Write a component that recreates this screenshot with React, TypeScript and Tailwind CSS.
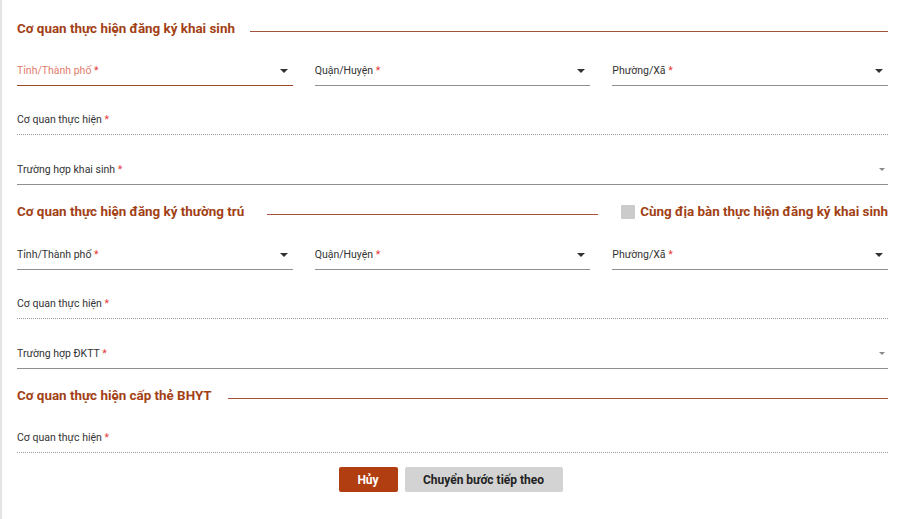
import React from "react";

const BROWN = "text-[#a23f15]";

function Header({ title, gap, right }: { title: string; gap: string; right?: React.ReactNode }) {
  return (
    <div className="flex h-[20px] items-center">
      <span className={`text-[13.4px] font-bold ${BROWN} whitespace-nowrap`}>{title}</span>
      <div className={`${gap} h-px flex-1 bg-[#a3533a] mt-[4px]`} />
      {right}
    </div>
  );
}

function Star() {
  return <span className="text-[#e53935]"> *</span>;
}

function Caret({ small }: { small?: boolean }) {
  if (small) {
    return (
      <svg width="6" height="3" viewBox="0 0 6 3" className="mr-[3px]">
        <path d="M0 0 L6 0 L3 3 Z" fill="#8a8a8a" />
      </svg>
    );
  }
  return (
    <svg width="8" height="4" viewBox="0 0 8 4" className="mr-[5px]">
      <path d="M0 0 L8 0 L4 4 Z" fill="#333" />
    </svg>
  );
}

function SelectField({ label, active }: { label: string; active?: boolean }) {
  return (
    <div
      className={`flex h-[30px] flex-1 items-center justify-between border-b ${
        active ? "border-[#9c4a2c]" : "border-[#8f8f8f]"
      }`}
    >
      <span className={`text-[10.5px] ${active ? "text-[#df7d6c]" : "text-[#333]"}`}>
        {label}
        <Star />
      </span>
      <Caret />
    </div>
  );
}

function WideField({ label, dotted, caret }: { label: string; dotted?: boolean; caret?: boolean }) {
  return (
    <div
      className={`flex h-[30px] items-center justify-between border-b ${
        dotted ? "border-dotted border-[#9a9a9a]" : "border-[#8f8f8f]"
      }`}
    >
      <span className="text-[10.5px] text-[#333]">
        {label}
        <Star />
      </span>
      {caret && <Caret small />}
    </div>
  );
}

export default function App() {
  return (
    <div
      className="min-h-screen bg-white border-l-2 border-[#e4e4e4] pl-[15px] pr-[13px] pt-[19px]"
      style={{ fontFamily: "Roboto, 'Noto Sans', sans-serif" }}
    >
      <Header title="Cơ quan thực hiện đăng ký khai sinh" gap="ml-[15px]" />
      <div className="mt-[17px] flex gap-[22px]">
        <SelectField label="Tỉnh/Thành phố" active />
        <SelectField label="Quận/Huyện" />
        <SelectField label="Phường/Xã" />
      </div>
      <div className="mt-[19px]">
        <WideField label="Cơ quan thực hiện" dotted />
      </div>
      <div className="mt-[20px]">
        <WideField label="Trường hợp khai sinh" caret />
      </div>

      <div className="mt-[17px]">
        <Header
          title="Cơ quan thực hiện đăng ký thường trú"
          gap="ml-[23px]"
          right={
            <label className="ml-[23px] flex items-center">
              <span className="h-[14px] w-[14px] bg-[#cbcbcb] rounded-[1px]" />
              <span className={`ml-[5px] text-[13.4px] font-bold ${BROWN} whitespace-nowrap`}>
                Cùng địa bàn thực hiện đăng ký khai sinh
              </span>
            </label>
          }
        />
      </div>
      <div className="mt-[18px] flex gap-[22px]">
        <SelectField label="Tỉnh/Thành phố" />
        <SelectField label="Quận/Huyện" />
        <SelectField label="Phường/Xã" />
      </div>
      <div className="mt-[19px]">
        <WideField label="Cơ quan thực hiện" dotted />
      </div>
      <div className="mt-[20px]">
        <WideField label="Trường hợp ĐKTT" caret />
      </div>

      <div className="mt-[17px]">
        <Header title="Cơ quan thực hiện cấp thẻ BHYT" gap="ml-[16px]" />
      </div>
      <div className="mt-[17px]">
        <WideField label="Cơ quan thực hiện" dotted />
      </div>

      <div className="mt-[14px] flex justify-center gap-[7px] pr-[4px]">
        <button className="h-[25px] w-[59px] rounded-[2px] bg-[#b13e10] text-[12px] font-bold text-white">
          Hủy
        </button>
        <button className="h-[25px] w-[158px] rounded-[2px] bg-[#d3d3d3] text-[12px] font-bold text-[#222]">
          Chuyển bước tiếp theo
        </button>
      </div>
    </div>
  );
}
